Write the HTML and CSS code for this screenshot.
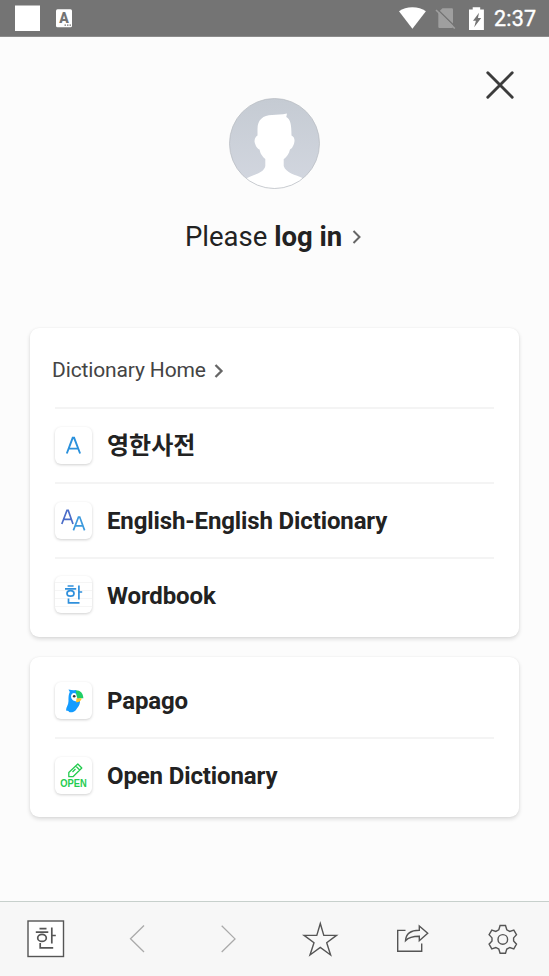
FILE: index.html
```html
<!DOCTYPE html>
<html lang="en">
<head>
<meta charset="utf-8">
<title>Dictionary</title>
<link rel="stylesheet" href="styles.css">
</head>
<body>
<div class="screen">
  <div class="status">
    <svg class="status-left" width="80" height="37" viewBox="0 0 80 37">
      <path fill="#fff" d="M15 5.500h25V31H15z"/>
      <rect x="56" y="9.300" width="16" height="18" rx="1.500" fill="#fff"/>
      <text x="64" y="22.500" class="status-letter">A</text>
      <path stroke="#777" stroke-width="1.300" stroke-dasharray="1.500 1" d="M64.500 25.200h7"/>
    </svg>
    <svg width="90" height="37" viewBox="398 0 90 37">
      <path fill="#fff" d="M399 11.300Q404.500 7.300 412.400 7.300T425.900 11.300L412.400 28.800z"/>
      <path fill="#9f9f9f" d="M442.500 8.300h9.300q1.200 0 1.200 1.200v17.300q0 1.200-1.200 1.200h-12.300q-1.200 0-1.200-1.200V12.300z"/>
      <path stroke="#747474" stroke-width="1.500" d="M437.500 9.500l18 17.500"/>
      <path stroke="#9f9f9f" stroke-width="1.600" d="M436 10l18.800 18.500"/>
      <path fill="#fff" d="M472.700 7.300h7.500v2.300h3.700V30H469V9.600h3.700z"/>
      <path fill="#747474" d="M479 12.800l-6 8h2.900l-1.700 6.500 7-9.300h-3.200z"/>
    </svg>
    <span class="time">2:37</span>
  </div>
  <header class="profile">
    <svg class="avatar" width="91" height="91" viewBox="0 0 91 91">
      <defs>
        <linearGradient id="sky" x1="0" y1="0" x2="0" y2="1"><stop offset="0" stop-color="#c5cbd3"/><stop offset="1" stop-color="#d3d7e0"/></linearGradient>
        <clipPath id="disc"><circle cx="45.500" cy="45.500" r="45"/></clipPath>
      </defs>
      <circle cx="45.500" cy="45.500" r="45" fill="url(#sky)"/>
      <path clip-path="url(#disc)" fill="#fff" d="M36.300 61C33 58 31.500 56 30.500 51.500 27.500 50.500 25.500 45 25.500 43Q25.500 39.500 28.500 37.500V31C28.500 22 34 17 43 17L54 16.300 58 15.500 57.300 19C61.500 21 62.500 27 62.500 37.500 66.500 39.500 66 44 64 48Q63 51 61 51.500C60 56 58 58.500 54.700 61.300V68C57 75 66 76.500 74.500 80.500V91H17V80.500C25 76.500 35 75 36.300 68z"/>
      <circle cx="45.500" cy="45.500" r="45" fill="none" stroke="#b6bbc1" stroke-opacity=".7"/>
    </svg>
    <svg class="close" width="30" height="30" viewBox="0 0 30 30"><path d="M2.800 2.800L27.200 27.200M27.200 2.800L2.800 27.200"/></svg>
  </header>
  <div class="login"><span>Please <b>log in</b></span><svg width="11" height="16" viewBox="0 0 11 16"><path d="M1.500 2L7.500 8 1.500 14"/></svg></div>

  <main class="cards">
    <section class="card">
      <div class="home"><span>Dictionary Home</span><svg width="11" height="16" viewBox="0 0 11 16"><path d="M1.500 2L7.500 8 1.500 14"/></svg></div>
      <div class="row first">
        <svg class="tile" width="37" height="37" viewBox="0 0 37 37"><path fill="none" stroke="#2b91dc" stroke-width="1.900" d="M11.800 26.500L17.700 10.800H19.100L25.100 26.500M13.800 21.600h9.300"/></svg>
        <span class="korean">영한사전</span>
      </div>
      <div class="row">
        <svg class="tile" width="37" height="37" viewBox="0 0 37 37"><path fill="none" stroke="#4a6cc8" stroke-width="1.700" d="M6.800 22L12 8.300H13.200L18 22M8.700 17.400h7.400"/><path fill="none" stroke="#3d9add" stroke-width="1.700" d="M18.400 28.400L23.500 15H24.700L29.600 28.400M20.200 23.900h7.600"/></svg>
        <span>English-English Dictionary</span>
      </div>
      <div class="row">
        <svg class="tile" width="37" height="37" viewBox="0 0 37 37"><path stroke="#f5f5f5" d="M0 6.500h37M0 14.500h37M0 22.500h37M0 30.500h37"/><g fill="none" stroke="#3090dc" stroke-width="1.700"><path d="M12.600 10h6M10 12.900h11.200M23.900 9.600v14M23.900 16h3.300M13.500 22.500v4.300h11"/><ellipse cx="15.500" cy="17.400" rx="3.500" ry="2.700"/></g></svg>
        <span>Wordbook</span>
      </div>
    </section>
    <section class="card second">
      <div class="row first">
        <svg class="tile" width="37" height="37" viewBox="0 0 37 37"><path fill="#139cff" d="M13.500 7.500Q18 8.500 21 8L25 18C25.500 23 22.500 25.500 21 28 19 30.500 16 30.500 14 30L13.500 29 11 28.500C11 25 13.500 23 13.500 19 13.500 14.500 13.500 13 14.800 10z"/><path fill="#20ce68" d="M20.700 8.200C25.500 8.200 28 11 28.400 16.200H22z"/><path fill="#fff" d="M16 14C16.500 11 19 10.300 21 11.700L22.300 16.200 21.800 19.200C18.500 19.500 16 17.500 16 14z"/><path fill="#ffc52e" d="M21.500 16.200h5c0 2.500-2.300 4-5.500 4z"/><circle cx="19.200" cy="14.300" r="1.300" fill="#333"/></svg>
        <span>Papago</span>
      </div>
      <div class="row">
        <svg class="tile" width="37" height="37" viewBox="0 0 37 37"><path fill="none" stroke="#25cc50" stroke-width="1.300" stroke-linejoin="round" d="M13.800 19.700V15.500L22.800 7 26.800 11 18 19.700zM20.700 9l4 4M17.500 15l3-3"/><text x="18.500" y="30" class="open" textLength="26.500" lengthAdjust="spacingAndGlyphs">OPEN</text></svg>
        <span>Open Dictionary</span>
      </div>
    </section>
  </main>

  <nav class="toolbar">
    <svg width="48" height="48" viewBox="0 0 48 48"><rect x="7" y="6" width="35.500" height="35.500" fill="#fff" stroke="#555" stroke-width="1.400"/><path class="glyph" d="M18.500 13.700h7M14.800 17.200h12.500M30.800 12.500v16M30.800 20.500h4M19.200 28v4.900h13"/><ellipse class="glyph" cx="21" cy="22.900" rx="4.300" ry="3.500"/></svg>
    <svg class="arrow" width="48" height="48" viewBox="0 0 48 48"><path d="M32 10.500L18.500 23.700 32 37"/></svg>
    <svg class="arrow" width="48" height="48" viewBox="0 0 48 48"><path d="M17.700 10.800L31 23.900 17.700 37"/></svg>
    <svg width="48" height="48" viewBox="0 0 48 48"><path d="M25.300 8.500L28.800 20.400H41.500L31.700 27.700 35.600 40 25.300 32.400 15 40 19 27.700 9.100 20.400H21.800z"/></svg>
    <svg width="48" height="48" viewBox="0 0 48 48"><path d="M18.500 15.400H10.700V36.300H34.700V28.500M32.300 11V15.200C24.500 15.200 19 18 18.500 25.700 22 22 26 21.300 32.300 21.300V25.800L40.700 18.300z"/></svg>
    <svg width="48" height="48" viewBox="0 0 48 48"><path d="M22.100 10.500h5.400l1.300 4.300 3 1.600 4-1.300 2.700 4.600-2.900 3.200v3.100l2.900 3.200-2.700 4.600-4-1.300-3 1.600-1.300 4.200h-5.400l-1.300-4.200-3-1.600-4 1.300-2.700-4.600 2.900-3.200v-3.100l-2.900-3.200 2.700-4.600 4 1.300 3-1.600z"/><circle cx="24.800" cy="24.400" r="4.800"/></svg>
  </nav>
</div>
</body>
</html>
```
FILE: styles.css
```css
* { box-sizing: border-box; }
body { margin: 0; font-family: Roboto, "Noto Sans CJK KR", sans-serif; color: #222; }
svg { display: block; flex: none; }
.screen { width: 549px; height: 976px; background: #fcfcfc; display: flex; flex-direction: column; overflow: hidden; }
.status { flex: none; height: 37px; background: #747474; border-bottom: 1px solid #8c8c8c; display: flex; align-items: flex-start; padding-right: 12px; }
.status-left { margin-right: auto; }
.status-letter { font: 900 14px Roboto, sans-serif; fill: #747474; text-anchor: middle; }
.time { width: 43px; margin-left: 6px; font-size: 21.500px; line-height: 38px; font-weight: 400; letter-spacing: .2px; -webkit-text-stroke: .4px #fff; color: #fff; white-space: nowrap; }
.profile { display: grid; grid-template-columns: 1fr 91px 1fr; padding: 33px 34px 0 34px; }
.avatar { grid-column: 2; margin-top: 28px; }
.close { justify-self: end; }
.close path { fill: none; stroke: #3c3c3c; stroke-width: 2.900; stroke-linecap: round; }
.login { display: flex; align-items: center; margin: 28px 0 0 185px; height: 38px; font-size: 27.500px; white-space: nowrap; }
.login b { font-weight: 700; }
.login svg { margin-left: 10px; margin-top: 1px; }
.login path, .home path { fill: none; stroke: #666; stroke-width: 2; }
.cards { margin-top: 73px; padding: 0 30px; display: flex; flex-direction: column; gap: 20px; }
.card { height: 309px; padding: 0 25px; border-radius: 9px; background: #fff; box-shadow: 0 2px 4px rgba(0,0,0,.14), 0 0 2px rgba(0,0,0,.05); }
.card.second { height: 160px; padding-top: 5px; }
.home { height: 79px; margin-left: -3px; padding-top: 4px; display: flex; align-items: center; font-size: 21px; letter-spacing: -0.130px; color: #444; }
.home svg { margin-left: 8px; margin-top: 2px; }
.home path { stroke-width: 2.300; }
.row { height: 74.800px; border-top: 2px solid #f4f4f4; display: flex; align-items: center; gap: 15px; font-size: 24px; font-weight: 700; letter-spacing: -0.130px; white-space: nowrap; }
.row span { padding-top: 1.600px; }
.second .first { border-top-color: transparent; }
.tile { border-radius: 6px; background: #fff; box-shadow: 0 1px 3px rgba(0,0,0,.19); }
.row .korean { font-family: "Noto Sans CJK KR", sans-serif; letter-spacing: 0; padding: 0; margin-top: -3px; }
.open { font: 700 10px "Liberation Sans", sans-serif; letter-spacing: 0; fill: #25cc50; text-anchor: middle; }
.toolbar { flex: none; height: 75px; margin-top: auto; padding: 13px 0 0 21px; display: grid; grid-template-columns: 91px 92px 91px 92px 91px 48px; border-top: 1px solid #c7d0cc; background: #f7f7f7; }
.toolbar path, .toolbar ellipse, .toolbar circle { fill: none; stroke: #555; stroke-width: 1.400; }
.toolbar .glyph { stroke-width: 1.700; }
.toolbar .arrow path { stroke: #aaa; stroke-width: 1.300; }
```
